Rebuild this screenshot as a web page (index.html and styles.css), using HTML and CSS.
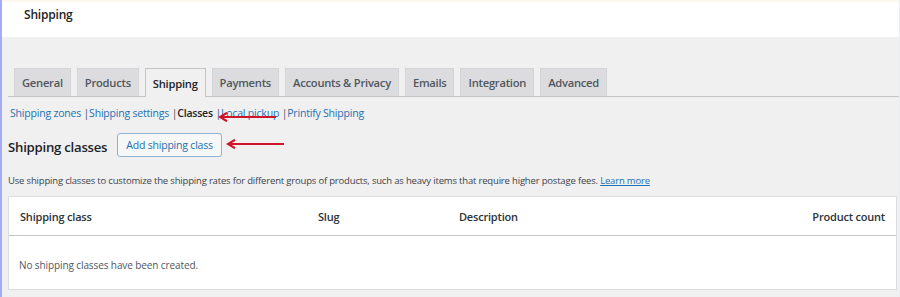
FILE: index.html
```html
<!DOCTYPE html>
<html>
<head>
<meta charset="utf-8">
<link rel="stylesheet" href="styles.css">
</head>
<body>
<div class="frame">
  <header class="topbar"><h1 class="page-title">Shipping</h1></header>
  <main class="content">
    <nav class="tabs">
      <span class="tab">General</span>
      <span class="tab">Products</span>
      <span class="tab active">Shipping</span>
      <span class="tab">Payments</span>
      <span class="tab">Accounts &amp; Privacy</span>
      <span class="tab">Emails</span>
      <span class="tab">Integration</span>
      <span class="tab">Advanced</span>
    </nav>
    <div class="subnav">
      <a class="sublink">Shipping zones</a> <span class="sep">|</span><a class="sublink">Shipping settings</a> <span class="sep">|</span><span class="current">Classes</span> <span class="sep">|</span><a class="sublink">Local pickup</a> <span class="sep">|</span><a class="sublink">Printify Shipping</a>
      <svg class="arrow arrow-one" width="60" height="10" viewBox="0 0 60 10"><path d="M58 5H4" stroke="#d0142a" stroke-width="2.2" fill="none"/><path d="M9 0.8L2 5L9 9.2" stroke="#d0142a" stroke-width="2.2" fill="none"/></svg>
    </div>
    <div class="heading-row">
      <h2 class="section-title">Shipping classes</h2>
      <button class="btn">Add shipping class</button>
      <svg class="arrow arrow-two" width="60" height="10" viewBox="0 0 60 10"><path d="M58 5H4" stroke="#d0142a" stroke-width="2.2" fill="none"/><path d="M9 0.8L2 5L9 9.2" stroke="#d0142a" stroke-width="2.2" fill="none"/></svg>
    </div>
    <p class="desc">Use shipping classes to customize the shipping rates for different groups of products, such as heavy items that require higher postage fees. <a class="learn">Learn more</a></p>
    <div class="table">
      <div class="thead">
        <span class="col c1">Shipping class</span>
        <span class="col c2">Slug</span>
        <span class="col c3">Description</span>
        <span class="col c4">Product count</span>
      </div>
      <div class="tbody">No shipping classes have been created.</div>
    </div>
  </main>
</div>
</body>
</html>
```

FILE: styles.css
```css
html, body {
  margin: 0;
  padding: 0;
}
body {
  width: 900px;
  height: 297px;
  overflow: hidden;
  font-family: "Open Sans", "Noto Sans", sans-serif;
  color: #3c434a;
  background: #f0f0f1;
}
.frame {
  border-left: 2px solid #a3abf2;
  border-right: 1px solid #ececf4;
  height: 297px;
  box-sizing: border-box;
}
.topbar {
  background: #fff;
  height: 37px;
  border-top: 2px solid #fdf8ee;
  box-sizing: border-box;
  padding-left: 22px;
  display: flex;
  align-items: center;
}
.page-title {
  margin: 0 0 10px;
  font-size: 12px;
  font-weight: 600;
  color: #1d2327;
  letter-spacing: -0.2px;
}
.content {
  padding: 31px 0 0 6px;
}
.tabs {
  display: flex;
  gap: 6px;
  padding-left: 6px;
  border-bottom: 1px solid #c3c4c7;
  height: 28px;
}
.tab {
  display: flex;
  align-items: center;
  padding: 0 7px;
  height: 27px;
  background: #dcdcde;
  border: 1px solid #d4d4d6;
  border-bottom: none;
  font-size: 11.2px;
  font-weight: 600;
  color: #50575e;
  letter-spacing: -0.25px;
}
.tab.active {
  background: #f0f0f1;
  border-color: #c3c4c7;
  color: #1d2327;
  height: 28px;
  margin-bottom: -1px;
}
.subnav {
  position: relative;
  margin-top: 9px;
  padding-left: 2px;
  font-size: 10.5px;
  letter-spacing: -0.2px;
  color: #50575e;
  height: 14px;
  line-height: 14px;
}
.sublink { color: #2271b1; }
.current { color: #1d2327; font-weight: 600; }
.sep { color: #50575e; }
.arrow { position: absolute; }
.arrow-one { left: 210px; top: 6px; }
.heading-row {
  position: relative;
  display: flex;
  align-items: center;
  margin-top: 13px;
  height: 24px;
}
.section-title {
  margin: 4px 0 0 0;
  font-size: 13.2px;
  font-weight: 600;
  color: #1d2327;
  letter-spacing: -0.25px;
}
.btn {
  margin-left: 10px;
  height: 24px;
  padding: 0 8px;
  background: #f6f7f7;
  border: 1px solid #8fb3d6;
  border-radius: 3px;
  color: #2271b1;
  font-family: inherit;
  font-size: 10.5px;
  letter-spacing: -0.2px;
}
.arrow-two { left: 218px; top: 6px; }
.desc {
  margin: 17px 0 0 0;
  font-size: 9.5px;
  color: #3c434a;
  letter-spacing: -0.18px;
}
.learn {
  color: #2271b1;
  text-decoration: underline;
}
.table {
  margin-top: 9px;
  margin-right: 2px;
  background: #fff;
  border: 1px solid #dcdcde;
  height: 94px;
  box-sizing: border-box;
}
.thead {
  display: grid;
  grid-template-columns: 298px 141px 1fr auto;
  align-items: center;
  height: 38px;
  padding: 0 11px 0 11px;
  border-bottom: 1px solid #c3c4c7;
  font-size: 11px;
  font-weight: 600;
  color: #2c3338;
  letter-spacing: -0.2px;
}
.tbody {
  padding: 22px 0 0 10px;
  font-size: 10px;
  color: #50575e;
  letter-spacing: -0.1px;
}
```
